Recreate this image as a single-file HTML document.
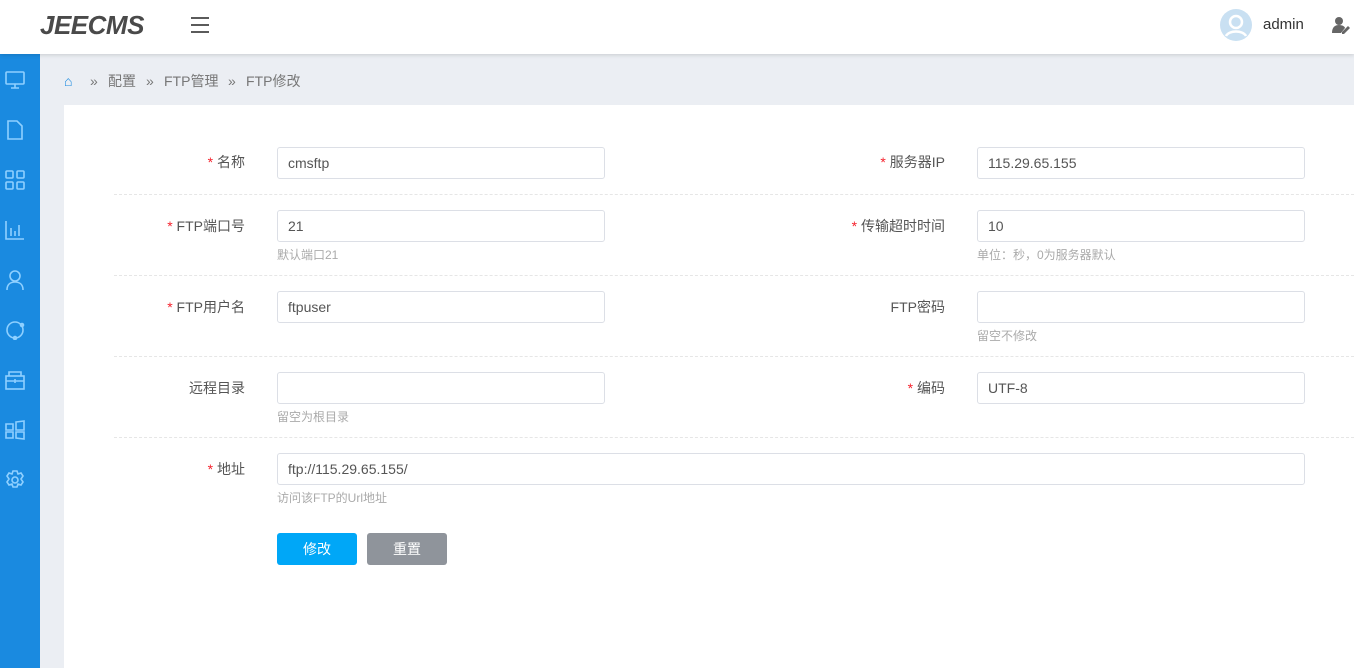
<!DOCTYPE html>
<html><head><meta charset="utf-8"><style>
*{box-sizing:border-box;margin:0;padding:0}
body{width:1354px;height:668px;overflow:hidden;background:#ebeef3;font-family:"Liberation Sans","Noto Sans CJK SC",sans-serif;position:relative}
.top{position:absolute;left:0;top:0;width:1354px;height:54px;background:#fff;box-shadow:0 1px 4px rgba(0,0,0,.15);z-index:2}
.logo{position:absolute;left:40px;top:10px;font-size:26px;font-weight:bold;font-style:italic;color:#4a4a4a;letter-spacing:-0.5px}
.side{position:absolute;left:0;top:54px;width:40px;height:614px;background:#1a8ae0}
.side svg{position:absolute;left:5px;width:20px;height:20px}
.crumb{position:absolute;left:64px;top:71px;font-size:14px;color:#777;word-spacing:0}
.crumb span{display:inline-block}
.panel{position:absolute;left:64px;top:105px;width:1290px;height:563px;background:#fff}
.a{position:absolute;font-size:14px;color:#555}
.lab{text-align:right;width:200px}
.lab b{color:#f5222d;font-weight:normal}
.in{position:absolute;height:32px;border:1px solid #dcdfe6;border-radius:3px;font-size:14px;color:#555;padding:7px 10px}
.hint{position:absolute;font-size:12px;color:#aaa}
.sep{position:absolute;left:114px;width:1240px;border-top:1px dashed #e6e6e6}
.btn{position:absolute;top:533px;width:80px;height:32px;border-radius:3px;color:#fff;font-size:14px;text-align:center;line-height:32px}
</style></head><body>
<div class="top">
<div class="logo">JEECMS</div>
<svg style="position:absolute;left:191px;top:17px" width="18" height="16"><path d="M0 1h18M0 8h18M0 15h18" stroke="#444" stroke-width="1.8"/></svg>
<svg style="position:absolute;left:1220px;top:9px" width="32" height="32"><circle cx="16" cy="16" r="16" fill="#c9e0f2"/><circle cx="16" cy="13" r="6" fill="none" stroke="#fff" stroke-width="2.5"/><path d="M6 27c3-6 17-6 20 0" fill="none" stroke="#fff" stroke-width="2.5"/></svg>
<div class="a" style="left:1263px;top:16px;font-size:15px;color:#333">admin</div>
<svg style="position:absolute;left:1332px;top:16px" width="18" height="18"><circle cx="7" cy="5" r="4" fill="#666"/><path d="M0 17c0-6 3-8 7-8s6 2 6 3l-4 5z" fill="#666"/><path d="M10 16l6-6 2 2-6 6h-2z" fill="#666"/></svg>
</div>
<div class="side">
<svg style="top:16px" viewBox="0 0 20 20" fill="none" stroke="#8fd0ff" stroke-width="1.6"><rect x="1" y="2" width="18" height="12" rx="1"/><path d="M10 14v4M6 18h8"/></svg>
<svg style="top:66px" viewBox="0 0 20 20" fill="none" stroke="#8fd0ff" stroke-width="1.6"><path d="M3 1h9l5 5v13H3z"/></svg>
<svg style="top:116px" viewBox="0 0 20 20" fill="none" stroke="#8fd0ff" stroke-width="1.6"><rect x="1" y="1" width="7" height="7" rx="1"/><rect x="12" y="1" width="7" height="7" rx="1"/><rect x="1" y="12" width="7" height="7" rx="1"/><rect x="12" y="12" width="7" height="7" rx="1"/></svg>
<svg style="top:166px" viewBox="0 0 20 20" fill="none" stroke="#8fd0ff" stroke-width="1.6"><path d="M1 1v18h18M6 8v8M10 11v5M14 5v11"/></svg>
<svg style="top:216px" viewBox="0 0 20 20" fill="none" stroke="#8fd0ff" stroke-width="1.6"><circle cx="10" cy="6" r="5"/><path d="M2 20c0-6 4-8 8-8s8 2 8 8"/></svg>
<svg style="top:266px" viewBox="0 0 20 20" fill="none" stroke="#8fd0ff" stroke-width="1.6"><circle cx="10" cy="10" r="8"/><circle cx="17" cy="5" r="1.5" fill="#8fd0ff"/><circle cx="10" cy="18" r="1.5" fill="#8fd0ff"/></svg>
<svg style="top:316px" viewBox="0 0 20 20" fill="none" stroke="#8fd0ff" stroke-width="1.6"><rect x="1" y="6" width="18" height="13"/><path d="M4 6V2h12v4M1 11h18M10 9v4"/></svg>
<svg style="top:366px" viewBox="0 0 20 20" fill="none" stroke="#8fd0ff" stroke-width="1.6"><path d="M1 4h7v6H1zM1 12h7v6H1zM11 2l8-1v9h-8zM11 12h8v7l-8-1z"/></svg>
<svg style="top:416px" viewBox="0 0 20 20" fill="none" stroke="#8fd0ff" stroke-width="1.6"><circle cx="10" cy="10" r="3"/><path d="M8 1h4l1 3 3-1 2 3-2 3 2 3-2 3-3-1-1 3H8l-1-3-3 1-2-3 2-3-2-3 2-3 3 1z"/></svg>
</div>
<div class="crumb"><span style="color:#1a8ae0;width:26px">⌂</span><span style="width:18px">»</span><span style="width:38px">配置</span><span style="width:18px">»</span><span style="width:64px">FTP管理</span><span style="width:18px">»</span><span>FTP修改</span></div>
<div class="panel"></div>

<div class="a lab" style="left:45px;top:152px"><b>* </b>名称</div>
<div class="in" style="left:277px;top:147px;width:328px">cmsftp</div>
<div class="a lab" style="left:745px;top:152px"><b>* </b>服务器IP</div>
<div class="in" style="left:977px;top:147px;width:328px">115.29.65.155</div>
<div class="sep" style="top:194px"></div>

<div class="a lab" style="left:45px;top:216px"><b>* </b>FTP端口号</div>
<div class="in" style="left:277px;top:210px;width:328px">21</div>
<div class="hint" style="left:277px;top:246px">默认端口21</div>
<div class="a lab" style="left:745px;top:216px"><b>* </b>传输超时时间</div>
<div class="in" style="left:977px;top:210px;width:328px">10</div>
<div class="hint" style="left:977px;top:246px">单位：秒，0为服务器默认</div>
<div class="sep" style="top:275px"></div>

<div class="a lab" style="left:45px;top:297px"><b>* </b>FTP用户名</div>
<div class="in" style="left:277px;top:291px;width:328px">ftpuser</div>
<div class="a lab" style="left:745px;top:297px">FTP密码</div>
<div class="in" style="left:977px;top:291px;width:328px"></div>
<div class="hint" style="left:977px;top:327px">留空不修改</div>
<div class="sep" style="top:356px"></div>

<div class="a lab" style="left:45px;top:378px">远程目录</div>
<div class="in" style="left:277px;top:372px;width:328px"></div>
<div class="hint" style="left:277px;top:408px">留空为根目录</div>
<div class="a lab" style="left:745px;top:378px"><b>* </b>编码</div>
<div class="in" style="left:977px;top:372px;width:328px">UTF-8</div>
<div class="sep" style="top:437px"></div>

<div class="a lab" style="left:45px;top:459px"><b>* </b>地址</div>
<div class="in" style="left:277px;top:453px;width:1028px">ftp://115.29.65.155/</div>
<div class="hint" style="left:277px;top:489px">访问该FTP的Url地址</div>

<div class="btn" style="left:277px;background:#00a7f7">修改</div>
<div class="btn" style="left:367px;background:#8f949b">重置</div>
</body></html>
